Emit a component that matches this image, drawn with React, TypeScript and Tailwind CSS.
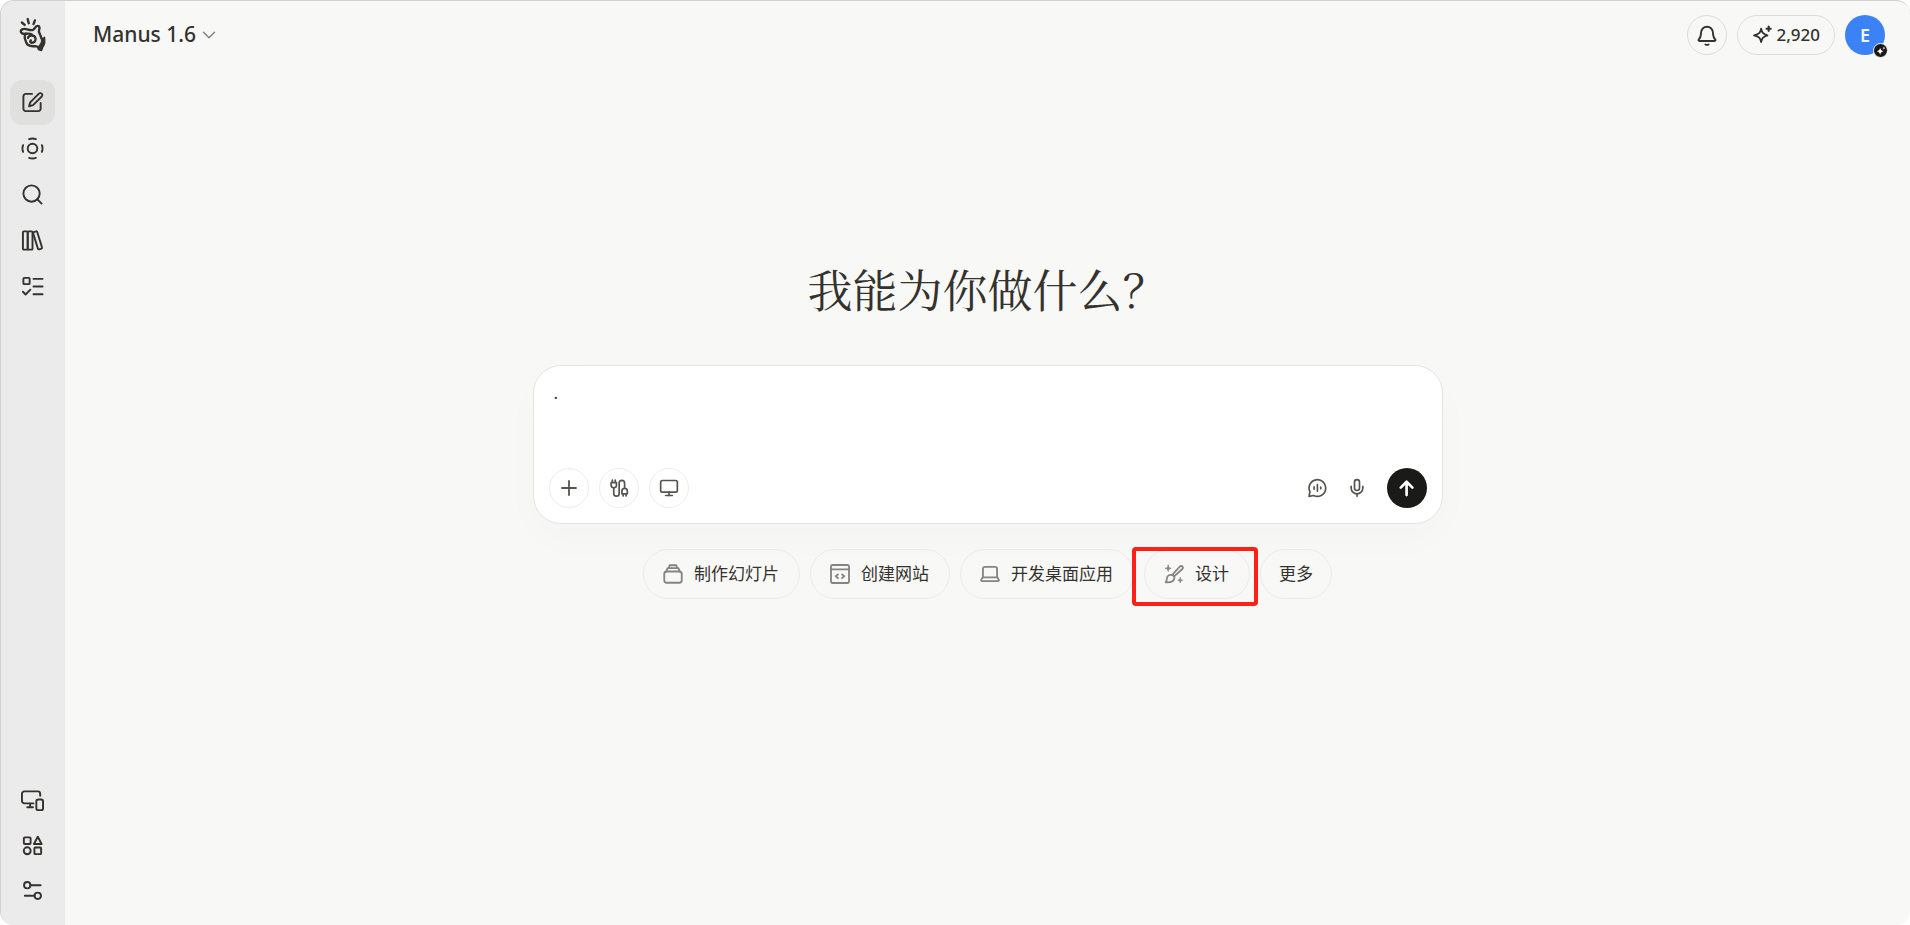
import { useState } from "react";
import type { ReactNode } from "react";
import { ChevronDown, Plus, Monitor, Mic } from "lucide-react";

type IconProps = {
    children: ReactNode,
    size?: string,
    stroke?: number
};

function Icon({ children, size = "size-[23px]", stroke = 2 }: IconProps) {
    return (
        <svg viewBox="0 0 24 24" fill="none" stroke="currentColor" strokeWidth={stroke} strokeLinecap="round" strokeLinejoin="round" className={size} aria-hidden="true">
            {children}
        </svg>
    );
}

function Logo() {
    return (
        <svg viewBox="54 54 84 102" className="ml-2 w-[29px] h-[35px]" fill="none" stroke="currentColor" strokeWidth="7" strokeLinecap="round" strokeLinejoin="round" aria-hidden="true">
            <path d="M65 70l8 7M82 60l3 12M103 64l-4 11" />
            <path d="M76 103c-8 1-14-2-14-7 0-7 10-9 19-6 6 2 12 4 17 1 6-4 7-11 13-11 7 0 6 7 4 12-2 6 2 9 4 15 2 5 2 9 5 12" />
            <path d="M76 103c8-1 14-1 18 2M74 106c-3 10 2 16 4 23 3 9 15 11 25 10 5 0 9 1 11 6" />
            <path d="M83 115c1-8 17-10 21-1 4 7-2 15-10 15-5 0-6-4-3-7" />
            <path d="M124 118l7-5c2 12 1 21-4 27l-5 12-9-3 2-10c5-5 8-11 9-21z" fill="currentColor" strokeWidth="4" />
        </svg>
    );
}

const navTop = [
    {
        label: "新建任务",
        icon: <Icon><path d="M11.500 3H5A2.500 2.500 0 0 0 2.500 5.500v13A2.500 2.500 0 0 0 5 21h13a2.500 2.500 0 0 0 2.500-2.500v-6" /><path d="M18.700 2.800a2 2 0 0 1 2.900 2.900l-9 9-4.200 1.200 1.200-4z" /></Icon>
    },
    {
        label: "智能体",
        icon: <Icon><circle cx="12" cy="12" r="5" /><path d="M8.500 2.200q3.500-1.400 7 0M8.500 21.800q3.500 1.400 7 0M2.200 8.500q-1.400 3.500 0 7M21.800 8.500q1.400 3.500 0 7" /></Icon>
    },
    { label: "搜索", icon: <Icon><circle cx="11" cy="11" r="8.500" /><path d="M17 17l4.500 4.500" /></Icon> },
    {
        label: "资料库",
        icon: <Icon><rect x="2" y="2.500" width="5" height="19" rx="1" /><rect x="7" y="2.500" width="5" height="19" rx="1" /><path d="M13.300 3.300l2.300-.8a1 1 0 0 1 1.300.6l5 16a1 1 0 0 1-.6 1.300l-2.300.8a1 1 0 0 1-1.300-.6L12.700 4.600a1 1 0 0 1 .6-1.300z" /></Icon>
    },
    {
        label: "任务",
        icon: <Icon><rect x="2.500" y="3" width="6.500" height="6.500" rx="1" /><path d="M2 17.500l2.800 2.800 5-5M13 4h9.500M13 12h9.500M13 20h9.500" /></Icon>
    }
];

const navBottom = [
    {
        label: "设备",
        icon: <Icon><path d="M20 7V5a2.500 2.500 0 0 0-2.500-2.500h-14A2.500 2.500 0 0 0 1 5v7.500A2.500 2.500 0 0 0 3.500 15H13M9.500 15v4M6.500 19H12.500" /><rect x="16" y="11" width="7" height="11" rx="2" /></Icon>
    },
    {
        label: "应用",
        icon: <Icon><rect x="3" y="3.500" width="7" height="7" rx="1" /><path d="M17.500 2.800l4 7.700h-8z" /><circle cx="6.500" cy="17.500" r="3.600" /><rect x="14" y="14" width="7" height="7" rx="1" /></Icon>
    },
    {
        label: "设置",
        icon: <Icon><circle cx="6.500" cy="6.500" r="3.300" /><path d="M10 6.500h10.500M4 17.500h10" /><circle cx="17.500" cy="17.500" r="3.300" /></Icon>
    }
];

const chips = [
    {
        label: "制作幻灯片",
        icon: <Icon size="size-[20px]" stroke={2.2}><rect x="1.500" y="9" width="21" height="13.500" rx="3" /><path d="M4 9l1.500-4h13L20 9M7 5l1-3.500h8L17 5" /></Icon>
    },
    {
        label: "创建网站",
        icon: <Icon size="size-[20px]" stroke={2.2}><rect x="1.200" y="1.200" width="21.600" height="21.600" rx="2" /><path d="M1 6.500h22M9.500 12.500L7 14.700l2.500 2.300M14.500 12.500L17 14.700l-2.500 2.300" /></Icon>
    },
    {
        label: "开发桌面应用",
        icon: <Icon size="size-[20px]" stroke={2.2}><path d="M3.500 16V6a2.500 2.500 0 0 1 2.500-2.500h12a2.500 2.500 0 0 1 2.500 2.500V16" /><path d="M3 16h18l1.500 3a1 1 0 0 1-1 1.500h-19a1 1 0 0 1-1-1.500z" /></Icon>
    },
    {
        label: "设计",
        marked: true,
        icon: <Icon size="size-[20px]" stroke={2.2}><path d="M10.500 12.500L19 3a2 2 0 0 1 3 3l-9.500 8.500M8.500 13a3.800 3.800 0 0 1 4 4c-.5 4-4 5.500-10.500 5 1.500-1.500 1-3 1.500-5A4.500 4.500 0 0 1 8.500 13z" /><path d="M5 1.500c.4 2.500 1 3.200 3.500 3.700C6 5.700 5.400 6.400 5 8.900 4.600 6.400 4 5.700 1.500 5.200 4 4.700 4.600 4 5 1.500zM19.500 16.500c.3 2 .8 2.700 2.800 3-2 .3-2.500 1-2.800 3-.3-2-.8-2.700-2.800-3 2-.3 2.500-1 2.800-3z" fill="currentColor" strokeWidth="1" /></Icon>
    }
];

function NavButton({ label, active, children }: { label: string, active?: boolean, children: ReactNode }) {
    return (
        <button type="button" aria-label={label} className={`flex items-center justify-center size-[45px] rounded-xl ${active ? "bg-[#e0e0df]" : ""}`}>
            {children}
        </button>
    );
}

function RoundButton({ label, children }: { label: string, children: ReactNode }) {
    return (
        <button type="button" aria-label={label} className="flex items-center justify-center size-10 rounded-full border border-[#ededed] text-[#535350]">
            {children}
        </button>
    );
}

export default function App() {

    const [ prompt, setPrompt ] = useState(".");

    return (
        <div className="min-h-screen bg-white flex">
            <div className="flex-1 flex overflow-hidden rounded-[14px] border-l border-t border-[#d0d0d0] bg-[#f8f8f7] text-[#34322d] font-['Noto_Sans','Noto_Sans_CJK_SC',sans-serif]">
                <aside className="w-16 shrink-0 flex flex-col items-start bg-[#ebebeb] pt-4 pb-3 pl-[9px]">
                    <Logo />
                    <nav className="mt-7 flex flex-col gap-px">
                        {navTop.map((item, i) => (
                            <NavButton key={item.label} label={item.label} active={i === 0}>{item.icon}</NavButton>
                        ))}
                    </nav>
                    <nav className="mt-auto flex flex-col">
                        {navBottom.map((item) => (
                            <NavButton key={item.label} label={item.label}>{item.icon}</NavButton>
                        ))}
                    </nav>
                </aside>

                <div className="flex-1 flex flex-col">
                    <header className="flex items-center justify-between h-[68px] pl-7 pr-[25px]">
                        <button type="button" className="flex items-center gap-[2px] text-[21px] font-medium">
                            Manus 1.6
                            <ChevronDown className="size-[22px] text-[#858481]" strokeWidth={1.6} />
                        </button>
                        <div className="flex items-center gap-[10px]">
                            <button type="button" aria-label="通知" className="flex items-center justify-center size-10 rounded-full border border-[#dcdcdb]">
                                <Icon size="size-[22px]"><path d="M5.500 9.500a6.500 6.500 0 0 1 13 0c0 4.500 1 6 2.600 7.500a.9.9 0 0 1-.6 1.500H3.500a.9.9 0 0 1-.6-1.500C4.500 15.500 5.500 14 5.500 9.500z" /><path d="M10.300 22.300q1.700 1 3.400 0" /></Icon>
                            </button>
                            <button type="button" className="flex items-center gap-1 h-10 px-[14px] rounded-full border border-[#dcdcdb] text-[17px] font-medium">
                                <Icon size="size-[20px]" stroke={2.2}><path d="M11 4.500c1 5 2.500 6.500 7.500 8-5 1.500-6.500 3-7.500 8-1-5-2.500-6.500-8.500-8 6-1.500 7.500-3 8.500-8z" /><path d="M20 2v5M17.500 4.500h5" strokeWidth="2.600" /></Icon>
                                2,920
                            </button>
                            <button type="button" className="relative flex items-center justify-center size-10 rounded-full bg-[#3b82f6] text-lg font-semibold text-[#f0f6ff]">
                                E
                                <span className="absolute -right-[3px] -bottom-[3px] size-[15px] rounded-full border border-[#f8f8f7] bg-[#1a1a19] flex items-center justify-center">
                                    <svg viewBox="0 0 24 24" fill="white" className="size-[10px]" aria-hidden="true">
                                        <path d="M10 4c1 5 3 7 8 8.500-5 1.500-7 3.500-8 8.500-1-5-3-7-8-8.500C7 11 9 9 10 4zM19 1l1 3 3 1-3 1-1 3-1-3-3-1 3-1z" />
                                    </svg>
                                </span>
                            </button>
                        </div>
                    </header>

                    <main className="flex flex-col items-center pt-[194px] px-6">
                        <h1 className="text-[45px] leading-[52px] font-normal font-['Noto_Serif_CJK_SC','Noto_Serif_SC','Noto_Sans_CJK_SC',serif]">我能为你做什么？</h1>

                        <form className="mt-[50px] w-full max-w-[910px] rounded-[28px] border border-[#e4e4e8] bg-white p-[15px] shadow-[0_15px_40px_rgba(0,0,0,0.02)]">
                            <textarea
                                aria-label="任务内容"
                                value={prompt}
                                onChange={(e) => setPrompt(e.target.value)}
                                className="block w-full h-[87px] px-[5px] resize-none outline-none text-[17px] leading-6" />
                            <div className="flex items-center justify-between">
                                <div className="flex gap-[10px]">
                                    <RoundButton label="添加"><Plus className="size-[24px]" strokeWidth={1.8} /></RoundButton>
                                    <RoundButton label="连接器">
                                        <Icon size="size-[20px]"><path d="M2.500 5.500h6.500v3A3.200 3.200 0 0 1 2.500 8.500zM4 5.500V2.500M7.500 5.500V2.500M5.700 12v6.500a3.200 3.200 0 0 0 6.500 0V6a3.200 3.200 0 0 1 6.500 0v6.500M15.500 19v-3.300a3.200 3.200 0 0 1 6.500 0V19zM17 19v2.700M20.500 19v2.700" /></Icon>
                                    </RoundButton>
                                    <RoundButton label="电脑"><Monitor className="size-[20px]" strokeWidth={2} /></RoundButton>
                                </div>
                                <div className="flex items-center text-[#535350]">
                                    <button type="button" aria-label="语音对话" className="flex items-center justify-center size-10">
                                        <Icon size="size-[20px]"><path d="M2.500 22l1-5.500a10 10 0 1 1 4.500 4.500z" /><path d="M8.500 10.500v3M12.500 8v8M16.500 11v2" /></Icon>
                                    </button>
                                    <button type="button" aria-label="语音输入" className="flex items-center justify-center size-10">
                                        <Mic className="size-[20px]" strokeWidth={2} />
                                    </button>
                                    <button type="submit" aria-label="发送" className="ml-[10px] flex items-center justify-center size-10 rounded-full bg-[#1a1a19] text-white">
                                        <Icon size="size-[20px]" stroke={3.2}><path d="M11.500 20.500V4.500M4.500 11.500l7-7 7 7" /></Icon>
                                    </button>
                                </div>
                            </div>
                        </form>

                        <div className="mt-[25px] flex flex-wrap justify-center gap-[10px]">
                            {chips.map((chip) => (
                                <div key={chip.label} className="relative">
                                    <button type="button" className="flex items-center gap-[11px] h-[50px] pl-[19px] pr-5 rounded-full border border-[#ebebea] text-[17px]">
                                        <span className="text-[#858481]">{chip.icon}</span>
                                        {chip.label}
                                    </button>
                                    {chip.marked && (
                                        <span className="absolute -left-3 -right-2 -top-[2px] -bottom-[7px] rounded border-4 border-[#ff2116] pointer-events-none" />
                                    )}
                                </div>
                            ))}
                            <button type="button" className="h-[50px] px-[18px] rounded-full border border-[#ebebea] text-[17px]">更多</button>
                        </div>
                    </main>
                </div>
            </div>
        </div>
    );
}
